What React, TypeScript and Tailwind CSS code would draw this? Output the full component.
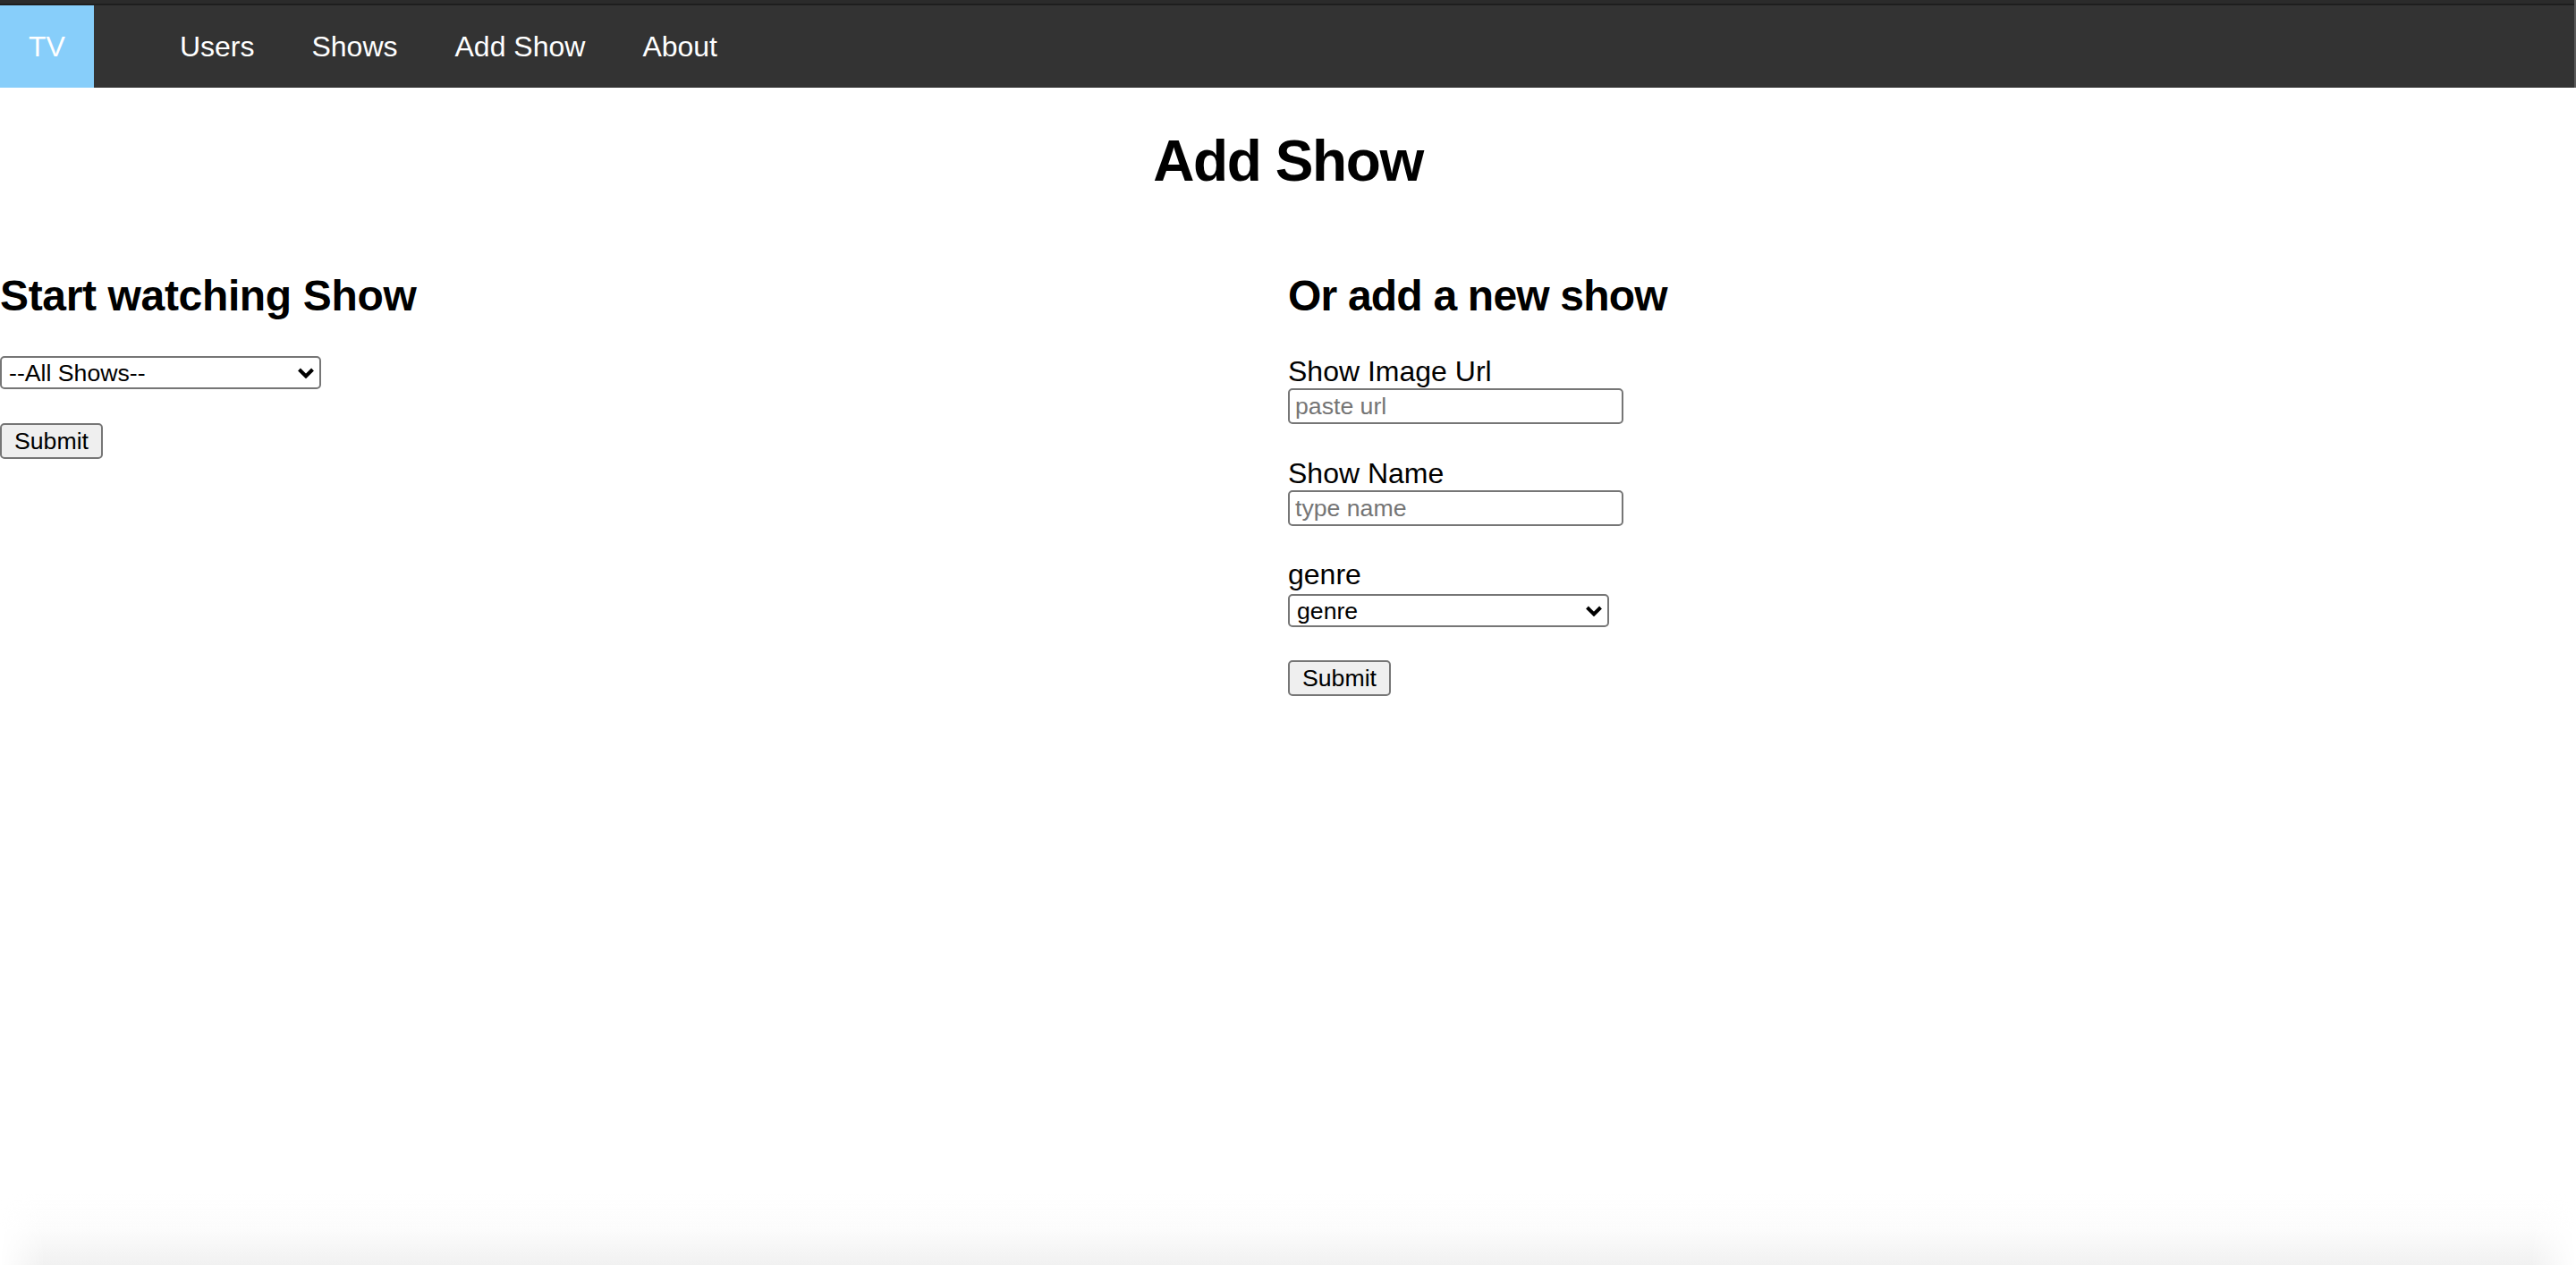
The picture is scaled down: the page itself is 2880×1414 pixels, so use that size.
import React from 'react';

const navLinks = ['Users', 'Shows', 'Add Show', 'About'];

const Chevron: React.FC = () => (
  <svg className="pointer-events-none absolute right-[7px] top-1/2 h-[12px] w-[20px] -translate-y-1/2" viewBox="0 0 20 12" fill="none">
    <polyline points="2.5,2 10,9.5 17.5,2" stroke="#000" strokeWidth="4" strokeLinecap="butt" strokeLinejoin="miter" />
  </svg>
);

const Select: React.FC<{ width: string; value: string }> = ({ width, value }) => (
  <div className={`relative ${width}`}>
    <select
      defaultValue={value}
      className="block h-[37px] w-full appearance-none rounded-[5px] border-2 border-[#767676] bg-white pl-[8px] text-[26.67px] leading-[30px] text-black outline-none"
    >
      <option>{value}</option>
    </select>
    <Chevron />
  </div>
);

const SubmitButton: React.FC = () => (
  <button
    type="button"
    className="block h-[40px] w-[115px] rounded-[5px] border-2 border-[#767676] bg-[#efefef] text-[26.67px] leading-[30px] text-black"
  >
    Submit
  </button>
);

const Field: React.FC<{ label: string; placeholder: string }> = ({ label, placeholder }) => (
  <div>
    <label className="block text-[32px] leading-[37px]">{label}</label>
    <input
      type="text"
      placeholder={placeholder}
      className="block h-[40px] w-[375px] rounded-[5px] border-2 border-[#767676] bg-white pl-[6px] text-[26.67px] leading-[30px] text-black outline-none placeholder:text-[#757575]"
    />
  </div>
);

const App: React.FC = () => {
  return (
    <div className="min-h-screen bg-white font-['Liberation_Sans',Arial,sans-serif] text-black">
      <div className="border-r-2 border-[#5a5a5a]">
        <div className="h-[4px] bg-[#2b2b2b]" />
        <div className="h-[2px] bg-[#1e1e1e]" />
        <nav className="flex h-[92px] items-stretch bg-[#333333]">
          <a href="#" className="flex items-center bg-[#87cefa] px-[32px] text-[32px] leading-[37px] text-white">
            TV
          </a>
          <ul className="ml-[64px] flex items-center">
            {navLinks.map((link) => (
              <li key={link}>
                <a href="#" className="block px-[32px] text-[32px] leading-[37px] text-white">
                  {link}
                </a>
              </li>
            ))}
          </ul>
        </nav>
      </div>

      <h1 className="mt-[45px] text-center text-[64px] font-bold leading-[74px] tracking-[-1.4px]">Add Show</h1>

      <div className="mt-[86px] grid grid-cols-2">
        <section>
          <h2 className="text-[48px] font-bold leading-[55px] tracking-[-0.35px]">Start watching Show</h2>
          <form className="mt-[40px]">
            <Select width="w-[359px]" value="--All Shows--" />
            <div className="mt-[38px]">
              <SubmitButton />
            </div>
          </form>
        </section>

        <section>
          <h2 className="text-[48px] font-bold leading-[55px] tracking-[-0.8px]">Or add a new show</h2>
          <form className="mt-[39px]">
            <Field label="Show Image Url" placeholder="paste url" />
            <div className="mt-[37px]">
              <Field label="Show Name" placeholder="type name" />
            </div>
            <div className="mt-[36px]">
              <label className="block text-[32px] leading-[37px]">genre</label>
              <div className="mt-[3px]">
                <Select width="w-[359px]" value="genre" />
              </div>
            </div>
            <div className="mt-[37px]">
              <SubmitButton />
            </div>
          </form>
        </section>
      </div>

      {/* soft fade along the bottom edge of the window */}
      <div className="pointer-events-none fixed inset-x-0 bottom-0 h-[80px] bg-gradient-to-b from-transparent via-[#fcfcfc] to-[#f1f1f1] [mask-image:linear-gradient(to_right,transparent,black_50px,black_calc(100%-50px),transparent)]" />
    </div>
  );
};

export default App;
